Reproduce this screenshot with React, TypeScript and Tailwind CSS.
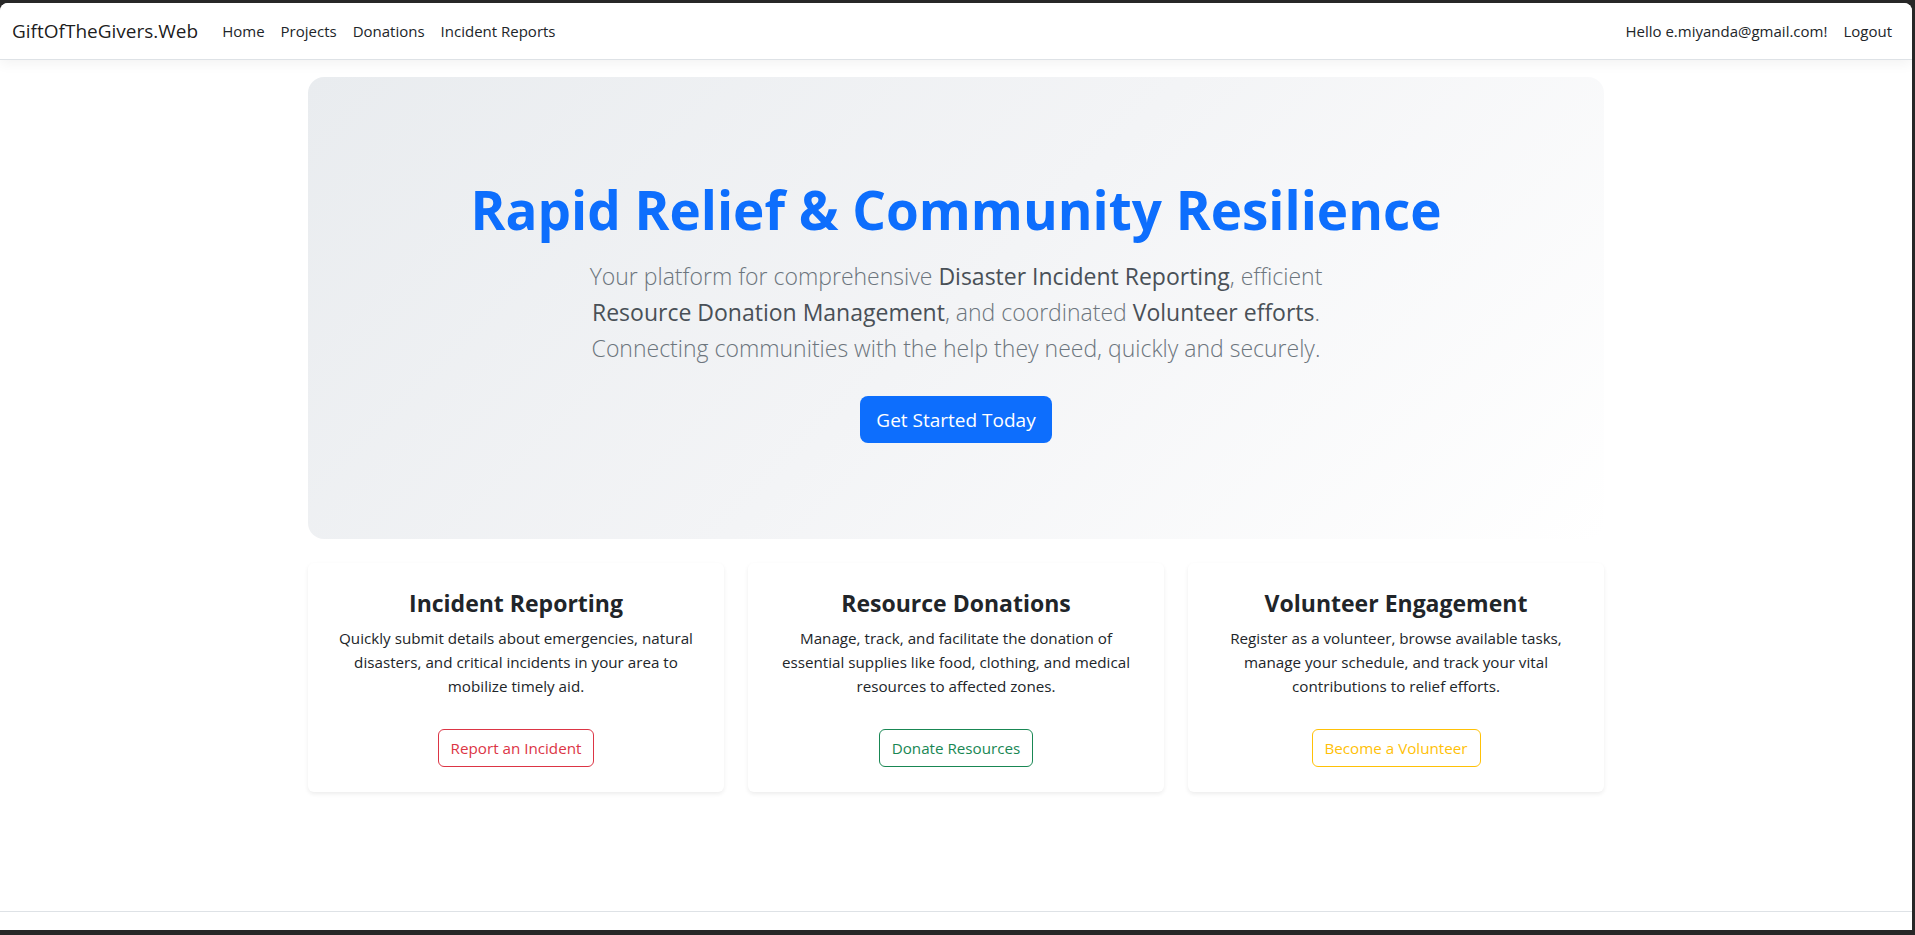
const navLinks = ["Home", "Projects", "Donations", "Incident Reports"];

const features = [
  {
    title: "Incident Reporting",
    lines: [
      "Quickly submit details about emergencies, natural",
      "disasters, and critical incidents in your area to",
      "mobilize timely aid.",
    ],
    action: "Report an Incident",
    tone: "border-[#dc3545] text-[#dc3545]",
  },
  {
    title: "Resource Donations",
    lines: [
      "Manage, track, and facilitate the donation of",
      "essential supplies like food, clothing, and medical",
      "resources to affected zones.",
    ],
    action: "Donate Resources",
    tone: "border-[#198754] text-[#198754]",
  },
  {
    title: "Volunteer Engagement",
    lines: [
      "Register as a volunteer, browse available tasks,",
      "manage your schedule, and track your vital",
      "contributions to relief efforts.",
    ],
    action: "Become a Volunteer",
    tone: "border-[#ffc107] text-[#ffc107]",
  },
];

export default function App() {
  return (
    <div className="h-screen bg-[#272727] pt-[3px] pr-[3px] pb-[5px] font-['Open_Sans',sans-serif] leading-normal text-[#212529]">
      <div className="h-full bg-white rounded-t-lg overflow-hidden flex flex-col">
        {/* Navbar */}
        <nav className="relative z-10 h-[57px] shrink-0 flex items-center px-3 bg-white border-b border-[#dee2e6] shadow-[0_4px_12px_rgba(0,0,0,0.05)]">
          <a className="text-[19px] text-black/90 mr-4">GiftOfTheGivers.Web</a>
          <ul className="flex items-center">
            {navLinks.map((link) => (
              <li key={link}>
                <a className="px-2 text-[15px] text-[#212529]">{link}</a>
              </li>
            ))}
          </ul>
          <div className="ml-auto flex items-center text-[15px] text-[#212529]">
            <span className="px-2">Hello e.miyanda@gmail.com!</span>
            <a className="px-2">Logout</a>
          </div>
        </nav>

        <main className="flex-1 overflow-hidden">
          <div className="mx-auto max-w-[1296px] pt-[17px]">
            {/* Hero */}
            <section className="rounded-2xl bg-[linear-gradient(135deg,#e9ecef_0%,#f3f4f6_50%,#ffffff_100%)] pt-[99px] pb-[96px] text-center">
              <h1 className="text-[53px] font-bold leading-[67px] text-[#0d6efd] mb-[15px]">
                Rapid Relief &amp; Community Resilience
              </h1>
              <p className="text-[23px] font-light leading-[36px] text-[#6c757d] mb-[30px]">
                Your platform for comprehensive{" "}
                <strong className="font-normal text-[#495057]">Disaster Incident Reporting</strong>, efficient
                <br />
                <strong className="font-normal text-[#495057]">Resource Donation Management</strong>, and coordinated{" "}
                <strong className="font-normal text-[#495057]">Volunteer efforts</strong>.
                <br />
                Connecting communities with the help they need, quickly and securely.
              </p>
              <button className="h-[47px] px-4 rounded-lg bg-[#0d6efd] text-white text-[19px] leading-[30px]">
                Get Started Today
              </button>
            </section>

            {/* Feature cards */}
            <div className="grid grid-cols-3 gap-6 mt-6">
              {features.map((f) => (
                <div
                  key={f.title}
                  className="bg-white rounded-md shadow-[0_2px_4px_rgba(0,0,0,0.075)] px-6 pt-[26px] pb-[25px] text-center"
                >
                  <h4 className="text-[23px] font-bold leading-[29px] mb-2">{f.title}</h4>
                  <p className="text-[15.2px] leading-6 mb-4 whitespace-nowrap">
                    {f.lines.map((line, i) => (
                      <span key={i} className="block">
                        {line}
                      </span>
                    ))}
                  </p>
                  <button
                    className={`mt-[15px] h-[38px] px-3 rounded-md border bg-transparent text-[15.2px] leading-6 ${f.tone}`}
                  >
                    {f.action}
                  </button>
                </div>
              ))}
            </div>
          </div>
        </main>

        <footer className="h-[19px] shrink-0 border-t border-[#dee2e6]" />
      </div>
    </div>
  );
}
